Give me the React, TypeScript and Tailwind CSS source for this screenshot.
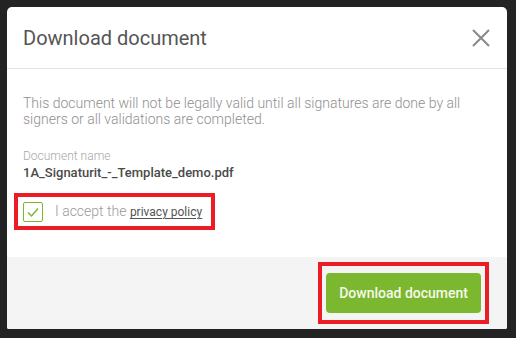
const App = () => {
  return (
    <div className="h-[338px] w-[516px] bg-[#232323] p-[7px] font-['Roboto',sans-serif]">
      <div className="flex h-[322px] w-[500px] flex-col overflow-hidden rounded-t-[5px] rounded-b-[2px] bg-white">
        {/* header */}
        <div className="flex h-[62px] items-center justify-between border-b border-[#e2e2e2] pl-[16px] pr-[14px]">
          <h2 className="text-[20px] font-normal text-[#555]">Download document</h2>
          <button className="flex h-[24px] w-[24px] items-center justify-center" aria-label="Close">
            <svg width="20" height="20" viewBox="0 0 20 20" fill="none">
              <path d="M2 2L18 18M18 2L2 18" stroke="#888" strokeWidth="2" />
            </svg>
          </button>
        </div>

        {/* body */}
        <div className="flex-1 px-[16px] pt-[26px]">
          <p className="text-[14px] font-light leading-[16px] text-[#8f8f8f]">
            This document will not be legally valid until all signatures are done by all signers or all validations are completed.
          </p>
          <div className="mt-[22px] text-[12px] font-light leading-[15px] text-[#a8a8a8]">Document name</div>
          <div className="text-[13px] font-medium leading-[17px] text-[#4a4a4a]">1A_Signaturit_-_Template_demo.pdf</div>

          <div className="-ml-[9px] mt-[12px] inline-flex items-center gap-[12px] border-4 border-[#ec1c24] py-[4px] pl-[5px] pr-[9px]">
            <span className="flex h-[20px] w-[20px] items-center justify-center rounded-[2px] border-[1.5px] border-[#7cb82f]">
              <svg width="14" height="14" viewBox="0 0 14 14" fill="none">
                <path d="M2 7.5L5.5 11L12 3.5" stroke="#7cb82f" strokeWidth="1.5" />
              </svg>
            </span>
            <span className="text-[14px] font-light text-[#9a9a9a]">
              I accept the{" "}
              <a className="text-[12px] font-normal text-[#555] underline underline-offset-2">privacy policy</a>
            </span>
          </div>
        </div>

        {/* footer */}
        <div className="flex h-[72px] items-center justify-end bg-[#f4f4f4] pr-[18px]">
          <div className="border-4 border-[#ec1c24] px-[4px] py-[7px]">
            <button className="h-[40px] rounded-[4px] bg-[#7cb82f] px-[13px] text-[14px] font-medium text-[#f4f9ec]">
              Download document
            </button>
          </div>
        </div>
      </div>
    </div>
  );
};

export default App;
